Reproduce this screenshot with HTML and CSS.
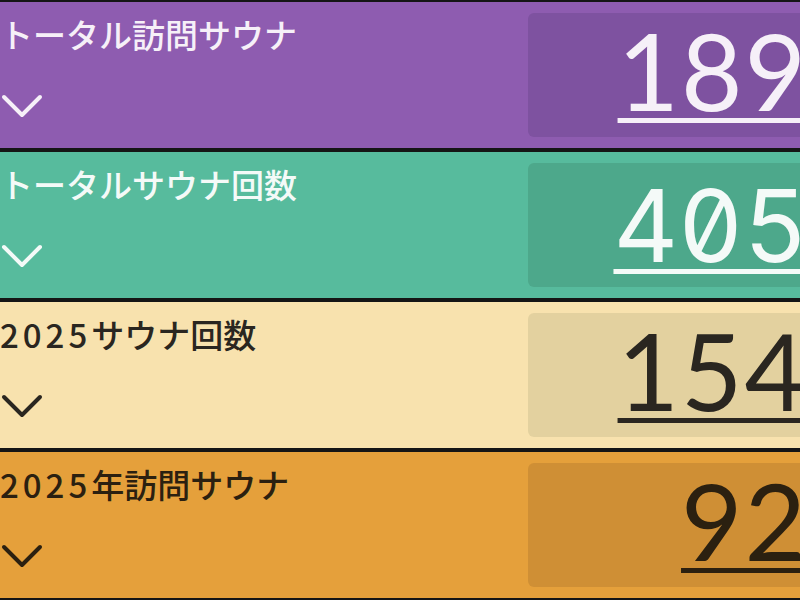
FILE: index.html
```html
<!DOCTYPE html>
<html lang="ja">
<head>
    <meta charset="UTF-8">
    <meta name="viewport" content="width=device-width, initial-scale=1.0">
    <title>サウナ記録</title>
    <link rel="stylesheet" href="styles.css">
</head>
<body>
    <div class="stats">
        <div class="stat-card purple">
            <div class="stat-info">
                <div class="stat-title">トータル訪問サウナ</div>
                <svg class="chevron" width="44" height="26" viewBox="0 0 44 26"><path d="M4 4 L22 22 L40 4"/></svg>
            </div>
            <div class="stat-box"><a class="stat-value">189</a></div>
        </div>
        <div class="stat-card teal">
            <div class="stat-info">
                <div class="stat-title">トータルサウナ回数</div>
                <svg class="chevron" width="44" height="26" viewBox="0 0 44 26"><path d="M4 4 L22 22 L40 4"/></svg>
            </div>
            <div class="stat-box"><a class="stat-value mono">405</a></div>
        </div>
        <div class="stat-card cream">
            <div class="stat-info">
                <div class="stat-title"><span class="year">2025</span>サウナ回数</div>
                <svg class="chevron" width="44" height="26" viewBox="0 0 44 26"><path d="M4 4 L22 22 L40 4"/></svg>
            </div>
            <div class="stat-box"><a class="stat-value">154</a></div>
        </div>
        <div class="stat-card orange">
            <div class="stat-info">
                <div class="stat-title"><span class="year">2025</span>年訪問サウナ</div>
                <svg class="chevron" width="44" height="26" viewBox="0 0 44 26"><path d="M4 4 L22 22 L40 4"/></svg>
            </div>
            <div class="stat-box"><a class="stat-value">92</a></div>
        </div>
    </div>
</body>
</html>
```

FILE: styles.css
```css
body {
    margin: 0;
    overflow: hidden;
    font-family: "Noto Sans CJK JP", "Noto Sans", sans-serif;
    background-color: #151515;
}
.stats {
    width: 828px;
}
.stat-card {
    display: flex;
    height: 146px;
    border-top: 2px solid #151515;
    border-bottom: 2px solid #151515;
}
.stat-info {
    flex: 1;
    padding-top: 12px;
}
.stat-title {
    font-size: 33px;
    line-height: 40px;
    font-weight: 500;
}
.year {
    letter-spacing: 4px;
}
.chevron {
    display: block;
    margin-top: 39px;
    fill: none;
    stroke: currentColor;
    stroke-width: 4;
    stroke-linecap: round;
    stroke-linejoin: round;
}
.stat-box {
    flex: 0 0 300px;
    box-sizing: border-box;
    margin: 11px 0;
    padding: 4px 20px 0 0;
    border-radius: 6px;
    text-align: right;
}
.stat-value {
    font-family: Lato, "Liberation Sans", sans-serif;
    font-size: 106px;
    line-height: 106px;
    letter-spacing: 2px;
    text-decoration: underline;
    text-decoration-thickness: 5px;
    text-underline-offset: 7px;
    cursor: pointer;
}
.stat-value.mono {
    font-family: Inter, Lato, sans-serif;
    font-weight: 400;
    font-size: 100px;
    line-height: 118px;
    letter-spacing: 0;
    font-feature-settings: "zero" 1, "tnum" 1;
}
.purple {
    background-color: #8e5cb0;
    color: #f6f0f8;
}
.purple .stat-box {
    background-color: #7e52a0;
}
.teal {
    background-color: #57bb9d;
    color: #f4faf8;
}
.teal .stat-box {
    background-color: #4da88b;
}
.cream {
    background-color: #f8e2ae;
    color: #2a2620;
}
.cream .stat-box {
    background-color: #e3d19f;
}
.orange {
    background-color: #e5a03b;
    color: #2b2010;
}
.orange .stat-box {
    background-color: #cf8f35;
}
```
